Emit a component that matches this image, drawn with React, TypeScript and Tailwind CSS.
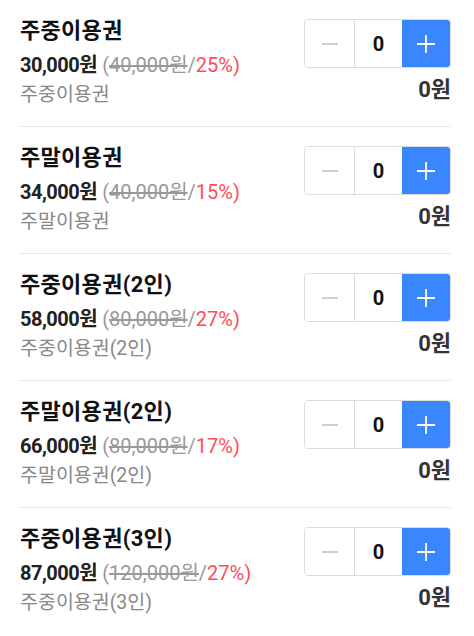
import React, { useState } from "react";

type Ticket = {
  name: string;
  price: number;
  original: number;
  rate: number;
};

const tickets: Ticket[] = [
  { name: "주중이용권", price: 30000, original: 40000, rate: 25 },
  { name: "주말이용권", price: 34000, original: 40000, rate: 15 },
  { name: "주중이용권(2인)", price: 58000, original: 80000, rate: 27 },
  { name: "주말이용권(2인)", price: 66000, original: 80000, rate: 17 },
  { name: "주중이용권(3인)", price: 87000, original: 120000, rate: 27 },
];

const won = (n: number) => n.toLocaleString("en-US") + "원";

function Stepper({ value, onChange }: { value: number; onChange: (v: number) => void }) {
  return (
    <div className="flex h-[49px] w-[147px] overflow-hidden rounded-[4px] border border-[#dcdcdc]">
      <button
        type="button"
        onClick={() => onChange(Math.max(0, value - 1))}
        className="flex w-[49px] items-center justify-center bg-white"
      >
        <span className="block h-[2px] w-[16px] bg-[#cfcfcf]" />
      </button>
      <div className="flex w-[48px] items-center justify-center border-l border-[#dcdcdc] text-[20px] font-bold text-[#111]">
        {value}
      </div>
      <button
        type="button"
        onClick={() => onChange(value + 1)}
        className="flex flex-1 items-center justify-center bg-[#3a87fd]"
      >
        <svg width="20" height="20" viewBox="0 0 20 20">
          <path d="M10 1v18M1 10h18" stroke="#fff" strokeWidth="1.8" />
        </svg>
      </button>
    </div>
  );
}

export default function App() {
  const [counts, setCounts] = useState<number[]>(tickets.map(() => 0));

  return (
    <div className="bg-white pl-[20px] pr-[23px] font-['Roboto','Noto_Sans_CJK_KR',sans-serif]">
      {tickets.map((t, i) => (
        <div
          key={t.name}
          className={`flex justify-between pb-[18px] pt-[18px] ${i < tickets.length - 1 ? "border-b border-[#e6e6e6]" : ""}`}
        >
          <div className="flex flex-col">
            <div className="text-[22px] font-bold leading-[26px] tracking-[0.3px] text-[#111]">{t.name}</div>
            <div className="mt-[8px] text-[20px] leading-[26px]">
              <span className="font-bold tracking-[-0.5px] text-[#222]">{won(t.price)}</span>{" "}
              <span className="text-[#999]">
                (<span className="line-through">{won(t.original)}</span>/
              </span>
              <span className="text-[#ff4b57]">{t.rate}%)</span>
            </div>
            <div className="mt-[4px] text-[19.5px] leading-[26px] text-[#888]">{t.name}</div>
          </div>
          <div className="flex flex-col items-end pt-[1px]">
            <Stepper
              value={counts[i]}
              onChange={(v) => setCounts((c) => c.map((x, j) => (j === i ? v : x)))}
            />
            <div className="mt-[8px] text-[22px] font-bold leading-[28px] text-[#333]">
              {won(counts[i] * t.price)}
            </div>
          </div>
        </div>
      ))}
    </div>
  );
}
